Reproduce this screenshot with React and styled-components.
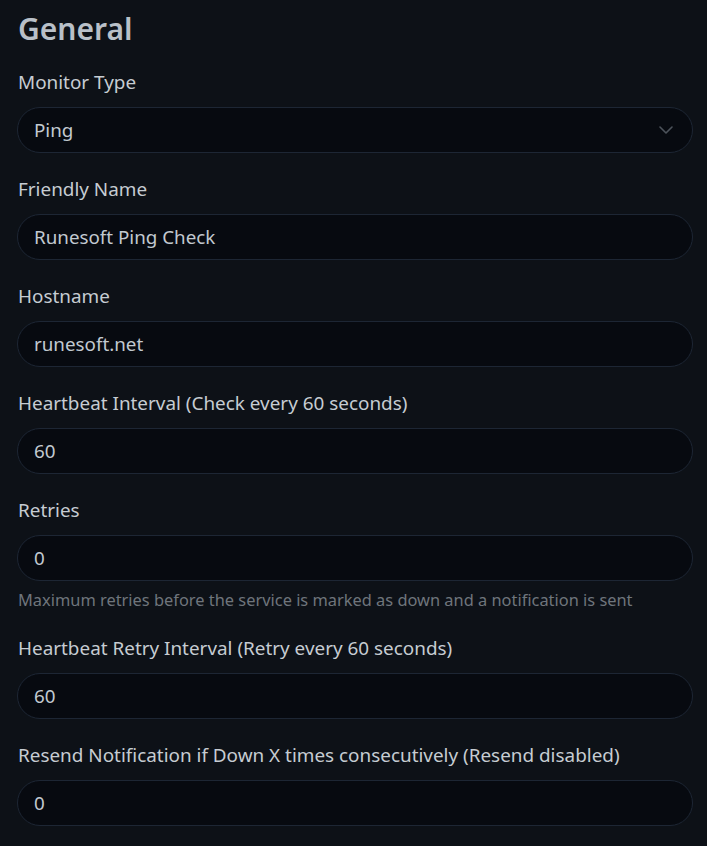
import React from "react";
import styled, { createGlobalStyle } from "styled-components";

const Global = createGlobalStyle`
  html, body { margin: 0; padding: 0; background: #0d1117; }
  body { font-family: "Noto Sans", "Open Sans", sans-serif; -webkit-font-smoothing: antialiased; }
  * { box-sizing: border-box; }
`;

const Page = styled.div`
  min-height: 846px;
  background: #0d1117;
  padding: 10px 14px 0 17px;
`;

const Title = styled.h2`
  margin: 0 0 21px 1px;
  font-size: 30px;
  line-height: 37px;
  font-weight: 600;
  color: #b9c0c8;
`;

const Field = styled.div`
  margin-bottom: 22px;
`;

const Label = styled.label`
  display: block;
  margin: 0 0 11px 1px;
  font-size: 18.9px;
  line-height: 28px;
  color: #c6ccd2;
`;

const Control = styled.div`
  position: relative;
  display: flex;
  align-items: center;
  height: 46px;
  padding: 0 16px;
  background: #070a10;
  border: 1px solid #1d2634;
  border-radius: 23px;
  font-size: 18.8px;
  color: #c2c9d0;
`;

const Chevron = styled.svg`
  position: absolute;
  right: 19px;
  top: 50%;
  transform: translateY(-50%);
`;

const Help = styled.div`
  margin: 6px 0 0 1px;
  font-size: 16.4px;
  line-height: 25px;
  color: #6f757c;
`;

const fields = [
  { label: "Monitor Type", value: "Ping", select: true },
  { label: "Friendly Name", value: "Runesoft Ping Check" },
  { label: "Hostname", value: "runesoft.net" },
  { label: "Heartbeat Interval (Check every 60 seconds)", value: "60" },
  {
    label: "Retries",
    value: "0",
    help: "Maximum retries before the service is marked as down and a notification is sent",
  },
  { label: "Heartbeat Retry Interval (Retry every 60 seconds)", value: "60" },
  { label: "Resend Notification if Down X times consecutively (Resend disabled)", value: "0" },
];

export default function App() {
  return (
    <>
      <Global />
      <Page>
        <Title>General</Title>
        {fields.map((f) => (
          <Field key={f.label}>
            <Label>{f.label}</Label>
            <Control>
              {f.value}
              {f.select && (
                <Chevron width="14" height="8" viewBox="0 0 14 8" fill="none">
                  <path d="M1 1l6 6 6-6" stroke="#4d535b" strokeWidth="1.6" strokeLinecap="round" strokeLinejoin="round" />
                </Chevron>
              )}
            </Control>
            {f.help && <Help>{f.help}</Help>}
          </Field>
        ))}
      </Page>
    </>
  );
}
